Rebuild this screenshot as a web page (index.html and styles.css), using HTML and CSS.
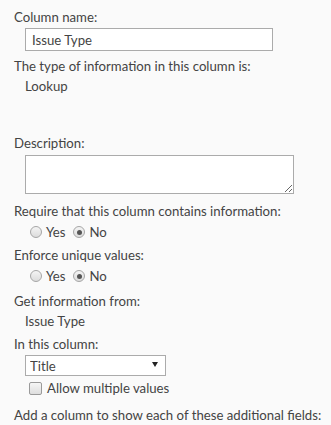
FILE: index.html
```html
<!DOCTYPE html>
<html lang="en">
<head>
  <meta charset="UTF-8" />
  <title>Edit Column</title>
  <link rel="stylesheet" href="styles.css">
</head>
<body>

  <!-- Name and type -->
  <div class="field">
    <div class="label">Column name:</div>
    <div class="indent"><input type="text" class="text-input" value="Issue Type" /></div>
  </div>

  <div class="field gap-sm">
    <div class="label">The type of information in this column is:</div>
    <div class="indent value">Lookup</div>
  </div>

  <!-- Additional settings -->
  <div class="field gap-lg">
    <div class="label">Description:</div>
    <div class="indent"><textarea class="text-area"></textarea></div>
  </div>

  <div class="field gap-md">
    <div class="label">Require that this column contains information:</div>
    <div class="radios">
      <label><input type="radio" name="required" /> Yes</label>
      <label><input type="radio" name="required" checked /> No</label>
    </div>
  </div>

  <div class="field gap-xs">
    <div class="label">Enforce unique values:</div>
    <div class="radios">
      <label><input type="radio" name="unique" /> Yes</label>
      <label><input type="radio" name="unique" checked /> No</label>
    </div>
  </div>

  <div class="field gap-sm">
    <div class="label">Get information from:</div>
    <div class="indent value">Issue Type</div>
  </div>

  <div class="field gap-xs">
    <div class="label">In this column:</div>
    <div class="indent">
      <div class="select-wrap">
        <select class="dropdown">
          <option>Title</option>
          <option>ID</option>
          <option>Modified</option>
        </select>
        <span class="arrow"></span>
      </div>
    </div>
    <label class="check"><input type="checkbox" /> Allow multiple values</label>
  </div>

  <div class="field gap-md">
    <div class="label">Add a column to show each of these additional fields:</div>
  </div>

</body>
</html>
```

FILE: styles.css
```css
* { box-sizing: border-box; }
body {
  margin: 0;
  padding: 7px 0 0 14px;
  background: #fafafa;
  color: #444;
  font-family: Lato, 'Open Sans', sans-serif;
  font-size: 13.2px;
}

.label, .value { line-height: 20px; white-space: nowrap; }
.indent { padding-left: 11px; }

.gap-xs { margin-top: 3px; }
.gap-sm { margin-top: 5px; }
.gap-md { margin-top: 7px; }
.gap-lg { margin-top: 37px; }

/* Inputs */
.text-input {
  display: block;
  margin-top: 1px;
  width: 248px;
  height: 23px;
  padding: 0 6px;
  border: 1px solid #ababab;
  background: #fff;
  color: #444;
  font: inherit;
}
.text-area {
  display: block;
  margin-top: 2px;
  width: 269px;
  height: 39px;
  border: 1px solid #ababab;
  background: #fff;
  font: inherit;
}

/* Radios */
.radios {
  display: flex;
  gap: 8px;
  margin-top: 1px;
  padding-left: 16px;
  line-height: 20px;
}
.radios label, .check {
  display: flex;
  align-items: center;
  gap: 4px;
}
.radios input {
  appearance: none;
  margin: 0;
  width: 12px;
  height: 12px;
  border: 1px solid #a6a6a6;
  border-radius: 50%;
  background: linear-gradient(#f4f4f4, #dcdcdc);
  position: relative;
}
.radios input:checked::after {
  content: "";
  position: absolute;
  left: 2.5px;
  top: 2.5px;
  width: 5px;
  height: 5px;
  border-radius: 50%;
  background: #555;
}

/* Select */
.select-wrap {
  position: relative;
  width: 141px;
  margin-top: 1px;
}
.dropdown {
  appearance: none;
  display: block;
  width: 141px;
  height: 21px;
  padding: 0 4px;
  border: 1px solid #ababab;
  border-radius: 0;
  background: #fff;
  color: #444;
  font: inherit;
}
.arrow {
  position: absolute;
  right: 8px;
  top: 7px;
  border-left: 3px solid transparent;
  border-right: 3px solid transparent;
  border-top: 5px solid #222;
}

/* Checkbox */
.check {
  margin-top: 2px;
  padding-left: 15px;
  line-height: 20px;
  gap: 5px;
}
.check input {
  appearance: none;
  margin: 0;
  width: 13px;
  height: 13px;
  border: 1px solid #9a9a9a;
  border-radius: 2px;
  background: linear-gradient(#f6f6f6, #dedede);
}
```
